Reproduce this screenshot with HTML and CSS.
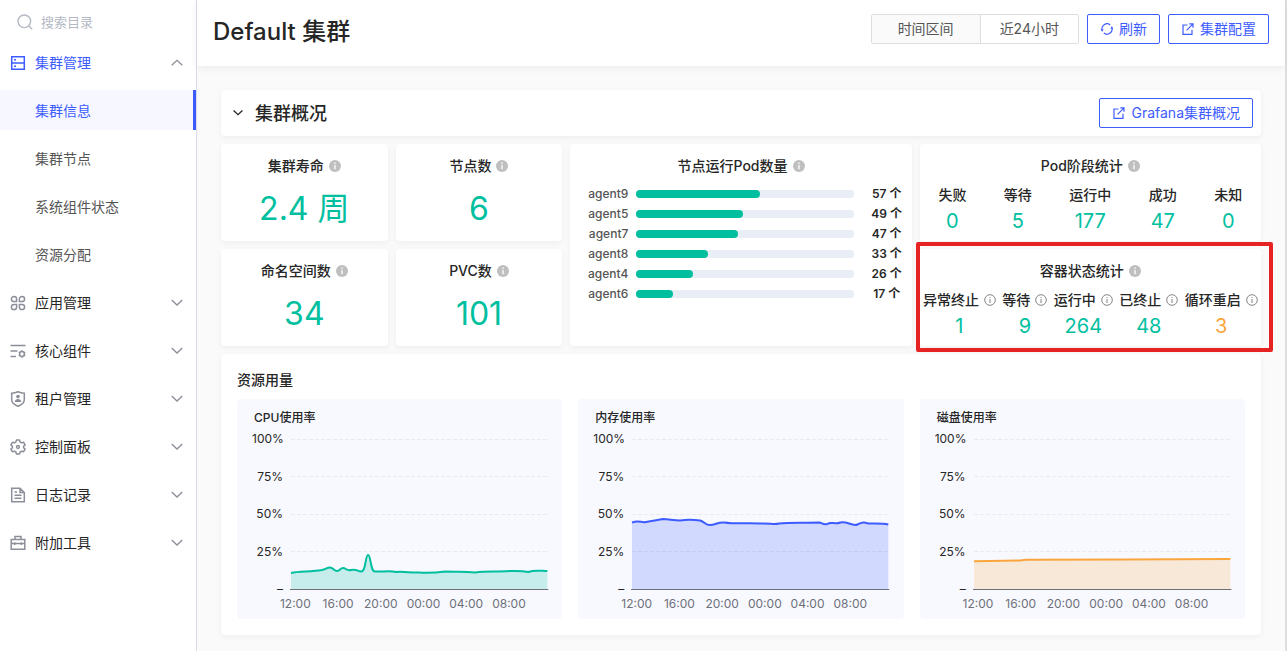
FILE: index.html
```html
<!DOCTYPE html>
<html lang="zh-CN">
  <head>
    <meta charset="UTF-8" />
    <meta name="viewport" content="width=device-width, initial-scale=1.0" />
    <title>Default 集群</title>
    <link rel="stylesheet" href="styles.css">
  </head>
  <body>
    <!-- shared icons -->
    <svg class="sprite" aria-hidden="true">
      <symbol id="down" viewBox="0 0 12 12"><path d="M.7 3 6 8l5.300-5" /></symbol>
      <symbol id="up" viewBox="0 0 12 12"><path d="M.7 8.300 6 3.300l5.300 5" /></symbol>
      <symbol id="info" viewBox="0 0 12 12">
        <circle cx="6" cy="6" r="6" fill="#bfbfbf" />
        <path d="M6 2.600v1.300M6 5v4.200" stroke="#fff" stroke-width="1.300" />
      </symbol>
      <symbol id="info-line" viewBox="0 0 12 12">
        <circle cx="6" cy="6" r="5.300" fill="none" stroke="#777" stroke-width=".9" />
        <path d="M6 3v1M6 5v4" stroke="#777" stroke-width=".9" />
      </symbol>
      <symbol id="link" viewBox="0 0 12 12">
        <path d="M5.500 2H1v9.300h9V6.700M7.300.9H11v3.800M11 .9 4.600 7.300" />
      </symbol>
      <symbol id="refresh" viewBox="0 0 12 12">
        <path d="M1 7.300A5.200 5.200 0 0 1 9.200 1.900M2.800 10.100A5.200 5.200 0 0 0 11 4.700" />
        <path d="M0 6.300h2.600L1.100 8.900zM12 5.700H9.400L10.900 3.100z" fill="currentColor" stroke="none" />
      </symbol>
    </svg>

    <div class="layout">
      <aside class="sidebar">
        <label class="search">
          <svg viewBox="0 0 16 16"><circle cx="7.300" cy="7.300" r="6.300" /><path d="m12 12 3.200 3.200" /></svg>
          <input type="text" placeholder="搜索目录" aria-label="搜索目录" />
        </label>
        <nav class="menu">
          <a class="menu-item open" href="#">
            <svg class="menu-icon" viewBox="0 0 16 16"><path d="M1.700 1.700h12.600v12.600H1.700zM1.700 8h12.600M4 4.800h2M4 11.200h2" /></svg>
            集群管理
            <svg class="arrow"><use href="#up" /></svg>
          </a>
          <a class="menu-item sub active" href="#">集群信息</a>
          <a class="menu-item sub" href="#">集群节点</a>
          <a class="menu-item sub" href="#">系统组件状态</a>
          <a class="menu-item sub" href="#">资源分配</a>
          <a class="menu-item" href="#">
            <svg class="menu-icon" viewBox="0 0 16 16"><path d="M6.600 6.600H4A2.600 2.600 0 1 1 6.600 4zM9.400 6.600H12A2.600 2.600 0 1 0 9.400 4zM6.600 9.400H4A2.600 2.600 0 1 0 6.600 12zM9.400 9.400H12A2.600 2.600 0 1 1 9.400 12z" /></svg>
            应用管理
            <svg class="arrow"><use href="#down" /></svg>
          </a>
          <a class="menu-item" href="#">
            <svg class="menu-icon" viewBox="0 0 16 16"><path d="M.5 2.500h15M.5 8h7M.5 13.500h5.500" /><circle cx="12" cy="11" r="2.400" /><path d="M12 7.300v1.200M12 13.500v1.200M8.800 9.200l1 .6M14.200 12.200l1 .6M15.200 9.200l-1 .6M9.800 12.200l-1 .6" /></svg>
            核心组件
            <svg class="arrow"><use href="#down" /></svg>
          </a>
          <a class="menu-item" href="#">
            <svg class="menu-icon" viewBox="0 0 16 16"><path d="M8 .8c2 .9 4 1.300 6.300 1.400v6.600c0 2.900-2.600 5-6.300 6.400C4.300 13.800 1.700 11.700 1.700 8.800V2.200C4 2.100 6 1.700 8 .8z" /><circle cx="8" cy="5.600" r="1.800" fill="currentColor" stroke="none" /><path d="M4.700 10.900c0-4 6.600-4 6.600 0z" fill="currentColor" stroke="none" /></svg>
            租户管理
            <svg class="arrow"><use href="#down" /></svg>
          </a>
          <a class="menu-item" href="#">
            <svg class="menu-icon" viewBox="0 0 16 16"><path d="M6.500 1h3l.6 2 1.400.8 2.100-.5 1.500 2.600L13.600 7.300v1.400l1.500 1.400-1.500 2.600-2.100-.5-1.400.8-.6 2h-3l-.6-2-1.400-.8-2.100.5L.9 10.100 2.400 8.700V7.300L.9 5.900l1.500-2.600 2.100.5L5.900 3z" stroke-linejoin="round" /><circle cx="8" cy="8" r="1.400" /></svg>
            控制面板
            <svg class="arrow"><use href="#down" /></svg>
          </a>
          <a class="menu-item" href="#">
            <svg class="menu-icon" viewBox="0 0 16 16"><path d="M10 1.200H1.700v13.600h12.600V5.500zM10 1.200v4.300h4.300M4.500 5h2.500M4.500 8.300h7M4.500 11.300h7" /></svg>
            日志记录
            <svg class="arrow"><use href="#down" /></svg>
          </a>
          <a class="menu-item" href="#">
            <svg class="menu-icon" viewBox="0 0 16 16"><path d="M1.200 4.500h13.600v9.800H1.200zM5 4.500V1.500h6v3M1.200 8.500h13.600M4.700 7.300v2.700M11.300 7.300v2.700" /></svg>
            附加工具
            <svg class="arrow"><use href="#down" /></svg>
          </a>
        </nav>
      </aside>

      <main class="main">
        <header class="header">
          <h1>Default 集群</h1>
          <div class="range">
            <span class="range-label">时间区间</span>
            <button class="range-value" type="button">近24小时</button>
          </div>
          <button class="btn" type="button"><svg><use href="#refresh" /></svg>刷新</button>
          <button class="btn" type="button"><svg><use href="#link" /></svg>集群配置</button>
        </header>

        <div class="content">
          <section class="card section-head">
            <svg class="fold"><use href="#down" /></svg>
            <h2>集群概况</h2>
            <button class="btn" type="button"><svg><use href="#link" /></svg>Grafana集群概况</button>
          </section>

          <section class="cards">
            <div class="card">
              <h3>集群寿命 <svg><use href="#info" /></svg></h3>
              <p class="big">2.4 周</p>
            </div>
            <div class="card">
              <h3>节点数 <svg><use href="#info" /></svg></h3>
              <p class="big">6</p>
            </div>
            <div class="card pods">
              <h3>节点运行Pod数量 <svg><use href="#info" /></svg></h3>
              <ul class="bars">
                <li><span class="name">agent9</span><span class="track"><span class="fill" style="width: 57%"></span></span><b>57 个</b></li>
                <li><span class="name">agent5</span><span class="track"><span class="fill" style="width: 49%"></span></span><b>49 个</b></li>
                <li><span class="name">agent7</span><span class="track"><span class="fill" style="width: 47%"></span></span><b>47 个</b></li>
                <li><span class="name">agent8</span><span class="track"><span class="fill" style="width: 33%"></span></span><b>33 个</b></li>
                <li><span class="name">agent4</span><span class="track"><span class="fill" style="width: 26%"></span></span><b>26 个</b></li>
                <li><span class="name">agent6</span><span class="track"><span class="fill" style="width: 17%"></span></span><b>17 个</b></li>
              </ul>
            </div>
            <div class="card wide">
              <h3>Pod阶段统计 <svg><use href="#info" /></svg></h3>
              <dl class="stats">
                <div><dt>失败</dt><dd>0</dd></div>
                <div><dt>等待</dt><dd>5</dd></div>
                <div><dt>运行中</dt><dd>177</dd></div>
                <div><dt>成功</dt><dd>47</dd></div>
                <div><dt>未知</dt><dd>0</dd></div>
              </dl>
            </div>
            <div class="card">
              <h3>命名空间数 <svg><use href="#info" /></svg></h3>
              <p class="big">34</p>
            </div>
            <div class="card">
              <h3>PVC数 <svg><use href="#info" /></svg></h3>
              <p class="big">101</p>
            </div>
            <div class="card wide marked">
              <h3>容器状态统计 <svg><use href="#info" /></svg></h3>
              <dl class="stats">
                <div><dt>异常终止<svg><use href="#info-line" /></svg></dt><dd>1</dd></div>
                <div><dt>等待<svg><use href="#info-line" /></svg></dt><dd>9</dd></div>
                <div><dt>运行中<svg><use href="#info-line" /></svg></dt><dd>264</dd></div>
                <div><dt>已终止<svg><use href="#info-line" /></svg></dt><dd>48</dd></div>
                <div><dt>循环重启<svg><use href="#info-line" /></svg></dt><dd class="warn">3</dd></div>
              </dl>
            </div>
          </section>

          <section class="card usage">
            <h3>资源用量</h3>
            <div class="charts">
              <div class="chart cpu">
                <h4>CPU使用率</h4>
                <div class="plot">
                  <div class="y-axis"><span>100%</span><span>75%</span><span>50%</span><span>25%</span><span>–</span></div>
                  <svg viewBox="0 0 256 150" preserveAspectRatio="none">
                    <path class="grid" d="M0 .5h256M0 37.500h256M0 75.500h256M0 112.500h256" />
                    <path class="area" d="M0 134C8 132 20 133 31 131C35 130 36 128.500 39 128.500C42 128.500 43 132 46 132C49 132 49 129 52 129C55 129 55 132 60 131C66 130 66 132 70 132.500C75 133 74 116 77 116C80 116 79 132.500 84 132.500C92 133 98 131.500 105 133C112 132 120 134 128 133.500C138 134 146 133.500 154 132.500C166 133 172 132 184 133.500C196 132 205 133 218 132C225 132 230 131.500 237 133C243 130.500 250 132 256 132V150H0z" />
                    <path class="line" d="M0 134C8 132 20 133 31 131C35 130 36 128.500 39 128.500C42 128.500 43 132 46 132C49 132 49 129 52 129C55 129 55 132 60 131C66 130 66 132 70 132.500C75 133 74 116 77 116C80 116 79 132.500 84 132.500C92 133 98 131.500 105 133C112 132 120 134 128 133.500C138 134 146 133.500 154 132.500C166 133 172 132 184 133.500C196 132 205 133 218 132C225 132 230 131.500 237 133C243 130.500 250 132 256 132" />
                    <path class="base" d="M-1 150.500h258" />
                  </svg>
                </div>
                <div class="x-axis"><span>12:00</span><span>16:00</span><span>20:00</span><span>00:00</span><span>04:00</span><span>08:00</span></div>
              </div>
              <div class="chart memory">
                <h4>内存使用率</h4>
                <div class="plot">
                  <div class="y-axis"><span>100%</span><span>75%</span><span>50%</span><span>25%</span><span>–</span></div>
                  <svg viewBox="0 0 256 150" preserveAspectRatio="none">
                    <path class="grid" d="M0 .5h256M0 37.500h256M0 75.500h256M0 112.500h256" />
                    <path class="area" d="M0 83.500C7 81 9 84 14 83C20 82 26 81 31 80C37 80 41 81.500 48 81.500C54 80.500 61 80.500 68 81.500C73 83 73 86 78 86C83 86 86 83 92 83.500C102 85 116 84 128 84.500C138 84 141 86 147 84.500C158 83 173 84 187 83.500C190 84 191 86 195 85C199 82 203 86 208 83.500C214 82.500 219 86 224 86C228 84 230 82.500 236 84.500C242 84.500 250 84 256 85.500V150H0z" />
                    <path class="line" d="M0 83.500C7 81 9 84 14 83C20 82 26 81 31 80C37 80 41 81.500 48 81.500C54 80.500 61 80.500 68 81.500C73 83 73 86 78 86C83 86 86 83 92 83.500C102 85 116 84 128 84.500C138 84 141 86 147 84.500C158 83 173 84 187 83.500C190 84 191 86 195 85C199 82 203 86 208 83.500C214 82.500 219 86 224 86C228 84 230 82.500 236 84.500C242 84.500 250 84 256 85.500" />
                    <path class="base" d="M-1 150.500h258" />
                  </svg>
                </div>
                <div class="x-axis"><span>12:00</span><span>16:00</span><span>20:00</span><span>00:00</span><span>04:00</span><span>08:00</span></div>
              </div>
              <div class="chart disk">
                <h4>磁盘使用率</h4>
                <div class="plot">
                  <div class="y-axis"><span>100%</span><span>75%</span><span>50%</span><span>25%</span><span>–</span></div>
                  <svg viewBox="0 0 256 150" preserveAspectRatio="none">
                    <path class="grid" d="M0 .5h256M0 37.500h256M0 75.500h256M0 112.500h256" />
                    <path class="area" d="M0 122.300 46 121.500 52 120.800 150 120.500 256 120V150H0z" />
                    <path class="line" d="M0 122.300 46 121.500 52 120.800 150 120.500 256 120" />
                    <path class="base" d="M-1 150.500h258" />
                  </svg>
                </div>
                <div class="x-axis"><span>12:00</span><span>16:00</span><span>20:00</span><span>00:00</span><span>04:00</span><span>08:00</span></div>
              </div>
            </div>
          </section>
        </div>
      </main>
    </div>
  </body>
</html>
```
FILE: styles.css
```css
* {
  box-sizing: border-box;
}

body {
  margin: 0;
  font-family: Inter, "Noto Sans CJK SC", sans-serif;
  font-size: 14px;
  line-height: 22px;
  color: #262626;
  background: #fafafa;
}

h1, h2, h3, h4, p, ul, dl, dd {
  margin: 0;
  padding: 0;
  font-weight: 500;
}

svg {
  flex: none;
  width: 12px;
  height: 12px;
  fill: none;
  stroke: currentColor;
  stroke-width: 1.2;
}

button, input {
  font: inherit;
}

.sprite {
  display: none;
}

.layout {
  display: flex;
  min-height: 100vh;
  box-shadow: inset 0 2px 2px rgba(0, 0, 0, 0.06);
}

/* sidebar */
.sidebar {
  flex: none;
  width: 197px;
  background: #fff;
  border-right: 1px solid #d9dcee;
}

.search {
  display: flex;
  align-items: center;
  gap: 8px;
  height: 42px;
  padding: 2px 17px 0;
  color: #b4b9c4;
}

.search svg {
  width: 16px;
  height: 16px;
  stroke-width: 1.4;
}

.search input {
  width: 100%;
  min-width: 0;
  padding: 0;
  border: 0;
  outline: 0;
  font-size: 13px;
  background: none;
}

.search input::placeholder {
  color: #b4b9c4;
}

.menu {
  display: flex;
  flex-direction: column;
  gap: 8px;
}

.menu-item {
  display: flex;
  align-items: center;
  gap: 9px;
  height: 40px;
  padding: 1px 13px 0 10px;
  color: #262626;
  text-decoration: none;
}

.menu-icon {
  width: 16px;
  height: 16px;
  color: #8c8f99;
  stroke-width: 1.5;
}

.arrow {
  margin-left: auto;
  color: #8c8f99;
  stroke-width: 1.3;
}

.sub {
  padding-left: 35px;
  color: #555;
}

.open, .open .menu-icon, .active {
  color: #3d5cff;
}

.active {
  background: #f6f7ff;
  border-right: 3px solid #3d5cff;
}

/* page header */
.main {
  flex: 1;
  min-width: 0;
  border-right: 2px solid #dedede;
}

.header {
  display: flex;
  align-items: flex-start;
  gap: 8px;
  height: 66px;
  padding: 14px 16px 0;
  background: #fff;
  box-shadow: 0 2px 8px rgba(0, 0, 0, 0.06);
}

.header h1 {
  margin-right: auto;
  font-size: 24px;
  line-height: 36px;
}

.range {
  display: flex;
  height: 30px;
  border: 1px solid #dedede;
  border-radius: 2px;
  color: #555;
  line-height: 28px;
}

.range-label {
  padding: 0 26px;
  background: #fafafa;
}

.range-value {
  padding: 0 19px;
  border: 0;
  border-left: 1px solid #dedede;
  background: #fff;
  color: #555;
}

.btn {
  display: flex;
  align-items: center;
  gap: 6px;
  height: 30px;
  padding: 0 12px 0 13px;
  border: 1px solid #3d5cff;
  border-radius: 2px;
  background: #fff;
  color: #3d5cff;
}

/* cards */
.content {
  display: flex;
  flex-direction: column;
  gap: 8px;
  padding: 24px 24px 16px;
}

.card {
  background: #fff;
  border-radius: 4px;
  box-shadow: 0 2px 6px rgba(0, 0, 0, 0.05);
}

.section-head {
  display: flex;
  align-items: center;
  height: 46px;
  padding: 0 8px 0 12px;
}

.section-head h2 {
  margin: 0 auto 0 12px;
  font-size: 18px;
  line-height: 24px;
  padding-top: 2px;
}

.fold {
  width: 10px;
  height: 10px;
  stroke-width: 1.6;
}

.cards {
  display: grid;
  grid-template-columns: repeat(6, 1fr);
  gap: 8px;
}

.cards .card {
  min-height: 97px;
  padding-top: 11px;
}

.cards h3 {
  display: flex;
  align-items: center;
  justify-content: center;
  gap: 5px;
}

h3 {
  font-size: 14px;
}

.cards svg {
  stroke: none;
}

.big {
  margin-top: 12px;
  font-size: 32px;
  font-weight: 400;
  line-height: 40px;
  text-align: center;
  color: #00bf9f;
}

.pods {
  grid-column: span 2;
  grid-row: span 2;
}

.wide {
  grid-column: span 2;
}

.bars {
  margin-top: 7px;
  list-style: none;
}

.bars li {
  display: flex;
  align-items: center;
  gap: 8px;
  height: 20px;
  font-size: 12px;
}

.bars .name {
  width: 58px;
  text-align: right;
  color: #555;
}

.bars b {
  width: 50px;
  font-weight: 600;
  text-align: center;
}

.track {
  flex: 1;
  height: 8px;
  border-radius: 4px;
  background: #e9edf6;
}

.fill {
  display: block;
  height: 8px;
  border-radius: 4px;
  background: #00bf9f;
}

.stats {
  display: flex;
  justify-content: space-around;
  margin-top: 7px;
  text-align: center;
}

.stats dt {
  display: flex;
  align-items: center;
  justify-content: center;
  gap: 5px;
}

.stats dd {
  font-size: 20px;
  font-weight: 400;
  line-height: 30px;
  color: #00bf9f;
}

.stats .warn {
  color: #faa53c;
}

.marked {
  position: relative;
}

.marked::after {
  content: "";
  position: absolute;
  inset: -7px -12px -6px -4px;
  border: 4px solid #e62222;
  border-radius: 2px;
  pointer-events: none;
}

/* charts */
.usage {
  padding: 15px 16px 16px;
}

.charts {
  display: grid;
  grid-template-columns: repeat(3, 1fr);
  gap: 16px;
  margin-top: 8px;
}

.chart {
  padding: 11px 15px 9px;
  border-radius: 4px;
  background: #f8f9ff;
  font-size: 12px;
}

.chart h4 {
  margin: 0 0 5px 2px;
  line-height: 16px;
}

.plot {
  display: flex;
  gap: 8px;
}

.y-axis {
  display: flex;
  flex-direction: column;
  justify-content: space-between;
  width: 31px;
  line-height: 16px;
  text-align: right;
}

.plot svg {
  flex: 1;
  min-width: 0;
  height: 150px;
  margin: 8px 0;
  overflow: visible;
}

.plot path {
  vector-effect: non-scaling-stroke;
}

.grid {
  stroke: #e9eaee;
  stroke-width: 1;
  stroke-dasharray: 4 2;
}

.line {
  stroke-width: 2;
}

.area {
  fill: currentColor;
  fill-opacity: 0.2;
  stroke: none;
}

.base {
  stroke: #6e7079;
  stroke-width: 1;
}

.cpu svg {
  color: #00bf9f;
}

.memory svg {
  color: #3d5cff;
}

.disk svg {
  color: #faa53c;
}

.x-axis {
  display: grid;
  grid-template-columns: repeat(6, 1fr);
  padding: 0 17px 0 22px;
  line-height: 13px;
  text-align: center;
  color: #6e7079;
}
```
